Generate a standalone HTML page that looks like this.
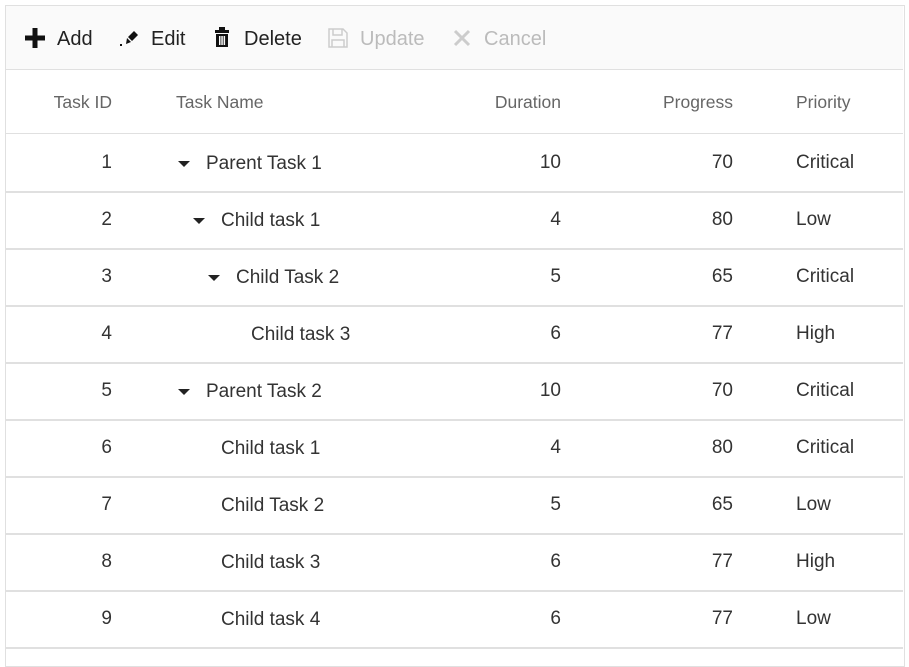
<!DOCTYPE html>
<html><head><style>
body{margin:0;width:909px;height:652px;background:#fff;font-family:"Liberation Sans",sans-serif;overflow:hidden;position:relative}
.box{position:absolute;left:5px;top:5px;width:898px;height:660px;border:1px solid #e0e0e0}
.tb{position:absolute;left:6px;top:6px;width:897px;height:63px;background:#fafafa;border-bottom:1px solid #e0e0e0}
.t{position:absolute;font-size:20px;color:#222;line-height:20px}
.d{color:#bbb}
.h{position:absolute;font-size:17.5px;color:#666;top:92px}
.line{position:absolute;left:6px;width:897px;height:1px;background:#e0e0e0}
.c{position:absolute;font-size:19px;color:#333}
.r{text-align:right}
.arr{position:absolute;width:0;height:0;border-left:6px solid transparent;border-right:6px solid transparent;border-top:6px solid #222}
</style></head><body>
<div class="box"></div>
<div class="tb"></div>
<svg style="position:absolute;left:25px;top:28px" width="20" height="20"><path d="M7.5 0h5v7.5H20v5h-7.5V20h-5v-7.5H0v-5h7.5z" fill="#111"/></svg>
<div class="t" style="left:57px;top:29px">Add</div>
<svg style="position:absolute;left:119px;top:28px" width="22" height="20"><path d="M9 9l6-6 4 4-6 6z M8 10l4 4-5 2z" fill="#111"/><rect x="1" y="16" width="2" height="2" fill="#111"/></svg>
<div class="t" style="left:151px;top:29px">Edit</div>
<svg style="position:absolute;left:214px;top:27px" width="18" height="21"><rect x="5" y="0" width="6" height="3" fill="#111"/><rect x="1" y="3" width="14" height="3" fill="#111"/><path d="M2 7h12v13H2z M5 9v9h1.5V9z M7.3 9v9h1.5V9z M9.6 9v9h1.5V9z" fill="#111" fill-rule="evenodd"/></svg>
<div class="t" style="left:244px;top:29px">Delete</div>
<svg style="position:absolute;left:328px;top:28px" width="20" height="20"><path d="M1 1h14l4 4v14H1z M5 1v6h9V1 M4 12h12v7H4z" fill="none" stroke="#ccc" stroke-width="1.5"/></svg>
<div class="t d" style="left:360px;top:29px">Update</div>
<svg style="position:absolute;left:453px;top:29px" width="18" height="18"><path d="M2 2l14 14M16 2L2 16" stroke="#ccc" stroke-width="3"/></svg>
<div class="t d" style="left:484px;top:29px">Cancel</div>

<div class="h r" style="left:30px;width:82px">Task ID</div>
<div class="h" style="left:176px">Task Name</div>
<div class="h r" style="left:440px;width:121px">Duration</div>
<div class="h r" style="left:600px;width:133px">Progress</div>
<div class="h" style="left:796px">Priority</div>
<div class="line" style="top:133px"></div>

<div id="rows"></div>
<script>
var d=[[1,"Parent Task 1",0,1,10,70,"Critical"],[2,"Child task 1",1,1,4,80,"Low"],[3,"Child Task 2",2,1,5,65,"Critical"],[4,"Child task 3",3,0,6,77,"High"],[5,"Parent Task 2",0,1,10,70,"Critical"],[6,"Child task 1",1,0,4,80,"Critical"],[7,"Child Task 2",1,0,5,65,"Low"],[8,"Child task 3",1,0,6,77,"High"],[9,"Child task 4",1,0,6,77,"Low"]];
var h="";
d.forEach(function(r,i){var top=134+i*57;var ty=top+18;
h+='<div class="c r" style="left:40px;width:72px;top:'+ty+'px">'+r[0]+'</div>';
var x=206+r[2]*15;
if(r[3])h+='<div class="arr" style="left:'+(x-28)+'px;top:'+(top+27)+'px"></div>';
h+='<div class="c" style="left:'+x+'px;top:'+(ty+1)+'px">'+r[1]+'</div>';
h+='<div class="c r" style="left:440px;width:121px;top:'+ty+'px">'+r[4]+'</div>';
h+='<div class="c r" style="left:600px;width:133px;top:'+ty+'px">'+r[5]+'</div>';
h+='<div class="c" style="left:796px;top:'+ty+'px">'+r[6]+'</div>';
h+='<div class="line" style="top:'+(top+57)+'px;height:2px"></div>';});
document.getElementById("rows").innerHTML=h;
</script>
</body></html>
